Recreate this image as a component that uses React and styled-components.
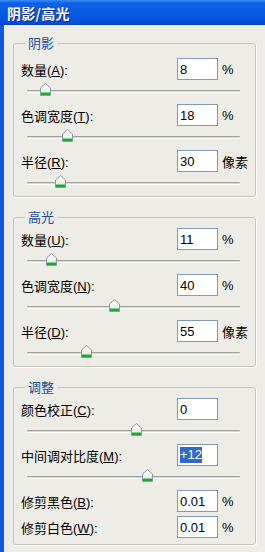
import React from "react";
import styled, { createGlobalStyle } from "styled-components";

const Global = createGlobalStyle`
  html, body {
    margin: 0;
    height: 100%;
    background: #edece6;
    overflow: hidden;
  }
  body {
    font-family: "Liberation Sans", "Noto Sans CJK SC", sans-serif;
    font-size: 13px;
    color: #000;
  }
`;

const groups = [
  {
    title: "阴影",
    pt: 7,
    pb: 0,
    fields: [
      { label: "数量", hot: "A", value: "8", unit: "%", thumb: 45 },
      { label: "色调宽度", hot: "T", value: "18", unit: "%", thumb: 67 },
      { label: "半径", hot: "R", value: "30", unit: "像素", thumb: 60 },
    ],
  },
  {
    title: "高光",
    pt: 3,
    pb: 0,
    fields: [
      { label: "数量", hot: "U", value: "11", unit: "%", thumb: 51 },
      { label: "色调宽度", hot: "N", value: "40", unit: "%", thumb: 114 },
      { label: "半径", hot: "D", value: "55", unit: "像素", thumb: 86 },
    ],
  },
  {
    title: "调整",
    pt: 3,
    pb: 6,
    fields: [
      { label: "颜色校正", hot: "C", value: "0", unit: "", thumb: 136 },
      { label: "中间调对比度", hot: "M", value: "+12", unit: "", thumb: 147, selected: true },
      { label: "修剪黑色", hot: "B", value: "0.01", unit: "%" },
      { label: "修剪白色", hot: "W", value: "0.01", unit: "%" },
    ],
  },
];

const TRACK_START = 27;

function Thumb() {
  return (
    <svg width="11" height="13" viewBox="0 0 11 13">
      <defs>
        <linearGradient id="tg" x1="0" y1="0" x2="0" y2="1">
          <stop offset="0" stopColor="#ffffff" />
          <stop offset="1" stopColor="#e4e6e0" />
        </linearGradient>
      </defs>
      <path d="M0.5 5 L5.5 0.5 L10.5 5 L10.5 12.5 L0.5 12.5 Z" fill="url(#tg)" stroke="#8c9aa6" />
      <rect x="1" y="9.5" width="9" height="2.5" fill="#21a43a" />
      <rect x="1" y="9" width="9" height="1" fill="#7fd48c" />
    </svg>
  );
}

function Field({ f, last }) {
  return (
    <FieldBlock $gap={f.thumb === undefined && !last ? 4 : 0}>
      <Row>
        <Label>
          {f.label}(<u>{f.hot}</u>):
        </Label>
        <Box>{f.selected ? <Sel>{f.value}</Sel> : f.value}</Box>
        <Unit>{f.unit}</Unit>
      </Row>
      {f.thumb !== undefined && (
        <Slider>
          <Track />
          <ThumbHolder style={{ left: f.thumb - TRACK_START - 5.5 }}>
            <Thumb />
          </ThumbHolder>
        </Slider>
      )}
    </FieldBlock>
  );
}

export default function App() {
  return (
    <Window>
      <Global />
      <TitleBar>阴影/高光</TitleBar>
      <Body>
        {groups.map((g) => (
          <Group key={g.title} $pt={g.pt} $pb={g.pb}>
            <Legend>{g.title}</Legend>
            {g.fields.map((f, i) => (
              <Field key={f.hot} f={f} last={i === g.fields.length - 1} />
            ))}
          </Group>
        ))}
      </Body>
    </Window>
  );
}

const Window = styled.div`
  display: flex;
  flex-direction: column;
  width: 265px;
  height: 552px;
`;

const TitleBar = styled.div`
  height: 25px;
  flex: none;
  box-sizing: border-box;
  padding-left: 7px;
  display: flex;
  align-items: center;
  background: linear-gradient(#3c8df7 0, #0d61e8 3px, #0a5be4 55%, #0651dc 85%, #0344c8 100%);
  color: #fff;
  font-family: "Noto Sans CJK SC", sans-serif;
  font-weight: 700;
  font-size: 14px;
  letter-spacing: 0.3px;
  text-shadow: 1px 1px 0 #0b2a86;
`;

const Body = styled.div`
  flex: 1;
  border-left: 4px solid #0c5ae0;
  padding: 10px 9px 0 9px;
  display: flex;
  flex-direction: column;
  gap: 12px;
`;

const Group = styled.fieldset`
  margin: 0;
  min-inline-size: 0;
  border: 1px solid #c6c5bb;
  border-radius: 3px;
  box-shadow: 1px 1px 0 #fff;
  padding: ${(p) => p.$pt}px 5px ${(p) => p.$pb}px 7px;
`;

const Legend = styled.legend`
  margin-left: 4px;
  padding: 0 3px;
  line-height: 16px;
  color: #1d4fa3;
  font-family: "Noto Sans CJK SC", sans-serif;
  font-size: 13px;
`;

const FieldBlock = styled.div`
  display: flex;
  flex-direction: column;
  margin-bottom: ${(p) => p.$gap}px;
`;

const Row = styled.div`
  display: flex;
  align-items: center;
  height: 22px;
`;

const Label = styled.div`
  flex: 1;
  white-space: nowrap;
  font-size: 13px;
  u {
    text-underline-offset: 1px;
  }
`;

const Box = styled.div`
  width: 41px;
  height: 22px;
  box-sizing: border-box;
  border: 1px solid #7f9db9;
  background: #fff;
  padding-left: 2px;
  display: flex;
  align-items: center;
  font-size: 13px;
`;

const Sel = styled.span`
  background: #316ac5;
  color: #fff;
  line-height: 16px;
`;

const Unit = styled.div`
  width: 28px;
  margin-left: 4px;
  font-size: 13px;
  white-space: nowrap;
`;

const Slider = styled.div`
  position: relative;
  height: 24px;
  margin: 0 10px 0 6px;
`;

const Track = styled.div`
  margin-top: 10px;
  height: 1px;
  border-top: 1px solid #a3a39c;
  border-bottom: 1px solid #fff;
  background: #d9d8d0;
  border-radius: 1px;
`;

const ThumbHolder = styled.div`
  position: absolute;
  top: 3px;
  width: 11px;
  height: 13px;
  svg {
    display: block;
  }
`;
